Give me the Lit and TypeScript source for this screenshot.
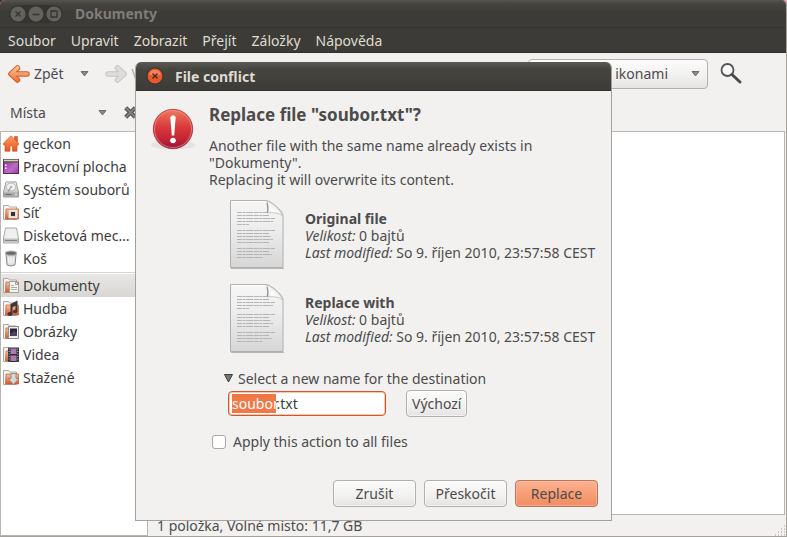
import { LitElement, html, svg, css, type TemplateResult } from "lit";
import { customElement, query, state } from "lit/decorators.js";
import { classMap } from "lit/directives/class-map.js";

interface Place {
  label: string;
  icon: TemplateResult;
  group: number;
}

const folder = svg`
  <path d="M.5 15.5V1.5h5l1 1.5h7v2" fill="#f7f6f4" stroke="#a9a7a2"/>
  <path d="M.5 15.5h13" stroke="#a9a7a2"/>
  <path d="M2.500 15 3 5h12.500v10z" fill="url(#orange)" stroke="#c8603a" stroke-width=".8"/>`;

const defs = svg`
  <defs>
    <linearGradient id="orange" x1="0" y1="0" x2="0" y2="1">
      <stop offset="0" stop-color="#f7c5a4"/><stop offset="1" stop-color="#e2551f"/>
    </linearGradient>
    <linearGradient id="grey" x1="0" y1="0" x2="0" y2="1">
      <stop offset="0" stop-color="#fafafa"/><stop offset="1" stop-color="#b4b4b4"/>
    </linearGradient>
    <linearGradient id="plum" x1="0" y1="0" x2="1" y2="1">
      <stop offset="0" stop-color="#8c2f96"/><stop offset=".6" stop-color="#c069c6"/><stop offset="1" stop-color="#9a3fa0"/>
    </linearGradient>
    <linearGradient id="roof" x1="0" y1="0" x2="0" y2="1">
      <stop offset="0" stop-color="#f9a06c"/><stop offset="1" stop-color="#e8541c"/>
    </linearGradient>
  </defs>`;

const glyph = (body: TemplateResult) =>
  html`<svg class="glyph" viewBox="0 0 16 17" aria-hidden="true">${defs}${body}</svg>`;

const places: Place[] = [
  { group: 0, label: "geckon", icon: glyph(svg`
    <path d="M11.500 1.500h3V8h-3z" fill="#e0622f" stroke="#c94f20" stroke-width=".6"/>
    <path d="M8 .8.6 8v2H2v6.200h5V11h2.500v5.200H14V10h1.400V8z" fill="url(#roof)" stroke="#d4551f" stroke-width=".7"/>`) },
  { group: 0, label: "Pracovní plocha", icon: glyph(svg`
    <rect x=".5" y="1.500" width="15" height="14" fill="url(#plum)" stroke="#5a2260"/>
    <rect x="0" y="1" width="16" height="3.500" fill="#54503c"/>
    <path d="M1 2.500h14" stroke="#d8d6bc" stroke-width="1.400"/>
    <path d="M2 6.500h1.600V8H2zM2 9.500h1.600V11H2z" fill="#fff"/>`) },
  { group: 0, label: "Systém souborů", icon: glyph(svg`
    <path d="M3 1h10l2.500 10v5H.5v-5z" fill="url(#grey)" stroke="#9a9a9a"/>
    <ellipse cx="8" cy="6" rx="4.800" ry="4" fill="#f0f0f0" stroke="#b5b5b5"/>
    <ellipse cx="8" cy="6" rx="1.300" ry="1" fill="#aaa"/>
    <path d="M7.500 7 5 10.500" stroke="#888" stroke-width="1.100"/>
    <path d="M1 11.500h14V15.500H1z" fill="#a8a8a8"/><path d="M2.500 13.500h6" stroke="#6a6a6a"/>
    <circle cx="13" cy="13.500" r=".9" fill="#eee"/>`) },
  { group: 0, label: "Síť", icon: glyph(svg`${folder}
    <rect x="5.500" y="6" width="9" height="8" fill="#fff" stroke="#d7a58e" stroke-width=".6"/>
    <rect x="6.500" y="7" width="7" height="6" fill="#dcdcdc"/>
    <rect x="8" y="8" width="4" height="4" fill="#333"/>`) },
  { group: 0, label: "Disketová mec…", icon: glyph(svg`
    <path d="M2.500 1h11l2 10v5H.5v-5z" fill="#efefef" stroke="#a9a9a9"/>
    <path d="M1 11.500h14V15.500H1z" fill="#c2c2c2"/>
    <path d="M2 13.500h12" stroke="#868686"/>`) },
  { group: 0, label: "Koš", icon: glyph(svg`
    <path d="M3 4h10l-1 11q-4 2-8 0z" fill="#dcdcdc" stroke="#8c8c8c"/>
    <ellipse cx="8" cy="3.200" rx="5.600" ry="2.200" fill="#6a6a6a" stroke="#b2b2b2" stroke-width="1.200"/>
    <path d="M5.500 7.500 6 13.500M8 7.500v6M10.500 7.500 10 13.500" stroke="#fafafa" stroke-width="1.200"/>`) },
  { group: 1, label: "Dokumenty", icon: glyph(svg`${folder}
    <path d="M6.500 4.500h6l3 3v8h-9z" fill="#f4f4f4" stroke="#a0a0a0"/>
    <path d="M12.500 4.500v3h3" fill="none" stroke="#a0a0a0"/>
    <path d="M8 8.500h3M8 10.500h6M8 12.500h6" stroke="#aaa"/>`) },
  { group: 1, label: "Hudba", icon: glyph(svg`${folder}
    <path d="M8.500 14V4.500l5-2.500v9" fill="none" stroke="#383838" stroke-width="2"/>
    <path d="M8.500 5 13.500 2.500v3l-5 2z" fill="#383838"/>
    <ellipse cx="7" cy="14" rx="2.500" ry="1.900" fill="#383838"/><ellipse cx="12.200" cy="11.500" rx="2.200" ry="1.800" fill="#383838"/>`) },
  { group: 1, label: "Obrázky", icon: glyph(svg`${folder}
    <rect x="5.500" y="3.500" width="10" height="12" fill="#eee" stroke="#8d8d8d"/>
    <rect x="7" y="5.500" width="7" height="7.500" fill="#2d2638"/>
    <path d="M7.500 11 11 8l3 2v3H7.500z" fill="#4c4262"/>`) },
  { group: 1, label: "Videa", icon: glyph(svg`${folder}
    <rect x="5" y="1.500" width="11" height="14.500" fill="#322c34"/>
    <path d="M7.500 2.500h6v5.500h-6zM7.500 9.500h6v5.500h-6z" fill="#a97bb0"/>
    <path d="M6.200 2.500v13M14.800 2.500v13" stroke="#ccc" stroke-width="1" stroke-dasharray="1 1.500"/>`) },
  { group: 1, label: "Stažené", icon: glyph(svg`${folder}
    <path d="M8 4.500h5v5h2.800L10.500 15.500 5.200 9.500H8z" fill="#d9d9d5" stroke="#8c8c88"/>`) },
];

const closeMark = svg`<path d="M5.500 5.500 10.500 10.500M10.500 5.500 5.500 10.500"/>`;

const sheetLines: Array<[number, number]> = [
  [12, 39], [15, 39], [18, 45], [21, 43], [24, 19],
  [30, 45], [33, 39], [36, 41], [39, 43], [42, 39],
  [48, 45], [51, 39], [54, 42], [57, 33],
];

@customElement("text-file-icon")
export class TextFileIcon extends LitElement {
  static styles = css`
    :host { display: block; }
    svg { display: block; width: 56px; height: 70px; }
  `;

  render() {
    return html`<svg viewBox="0 0 56 70" aria-hidden="true">
      <defs>
        <linearGradient id="paper" x1="0" y1="0" x2="0" y2="1">
          <stop offset="0" stop-color="#f6f6f6"/><stop offset=".45" stop-color="#ececec"/><stop offset="1" stop-color="#d6d6d6"/>
        </linearGradient>
        <linearGradient id="curl" x1="0" y1="1" x2="1" y2="0">
          <stop offset="0" stop-color="#c4c4c4"/><stop offset=".35" stop-color="#fff"/><stop offset="1" stop-color="#d0d0d0"/>
        </linearGradient>
      </defs>
      <path d="M1 68.500h53" stroke="#b5b4b2" stroke-width="1.200"/>
      <path d="M.5.5h36c5 1 16 10 16.500 15V67.500H.5z" fill="url(#paper)" stroke="#b0b0ae"/>
      <path d="M1.500 1.500h35" stroke="#fff"/>
      ${sheetLines.map(([y, end]) => svg`<path d="M7 ${y + .5}H${end}" stroke="#b4b4b4" stroke-width="1.200" stroke-dasharray="5 .6 3 .6 7 .6"/>`)}
      <path d="M36.500 1c2 3 2 8 1 12 5-1 12 0 15 3C51 10 42 2 36.500 1z" fill="url(#curl)" stroke="#b4b4b2" stroke-width=".7"/>
      <path d="M37 3c1 3 1 7 .3 9.500" fill="none" stroke="#939393" stroke-width="1.200"/>
    </svg>`;
  }
}

@customElement("conflict-dialog")
export class ConflictDialog extends LitElement {
  static styles = css`
    :host {
      display: block;
      box-sizing: border-box;
      border: 1px solid #a5a29d;
      border-top: 0;
      border-radius: 6px 6px 0 0;
      background: #f2f1f0;
      color: #4c4c4c;
      overflow: hidden;
    }
    .title {
      display: flex;
      align-items: center;
      gap: 11px;
      height: 29px;
      box-sizing: border-box;
      padding: 0 10px;
      background: linear-gradient(#5a5953, #45443f 30%, #3c3b37);
      border-bottom: 1px solid #32312d;
      color: #dfdbd2;
      font-size: 14px;
      font-weight: bold;
    }
    .close { padding: 0; border: 0; background: none; height: 18px; }
    .close svg { display: block; width: 18px; height: 18px; }
    .body { display: flex; padding: 12px 13px 0 13px; }
    .alert { flex: none; width: 48px; height: 48px; margin: 0 12px 0 0; }
    .content { flex: 1; min-width: 0; }
    h1 { margin: 0; font-size: 17px; line-height: 24px; }
    p { margin: 10px 0 12px; line-height: 17px; max-width: 348px; }
    .file { display: flex; align-items: center; gap: 19px; margin: 0 0 14px 21px; height: 70px; }
    .facts { line-height: 17px; white-space: nowrap; }
    .facts div { margin: 0; }
    .expander {
      display: flex;
      align-items: center;
      gap: 5px;
      padding: 0;
      margin: 0 0 1px 15px;
      border: 0;
      background: none;
      color: inherit;
      font: inherit;
      line-height: 21px;
    }
    .expander svg { width: 9px; height: 9px; }
    .rename { display: flex; align-items: center; gap: 20px; margin-left: 19px; }
    .name {
      box-sizing: border-box;
      width: 158px;
      height: 25px;
      padding: 0 3px;
      border: 1px solid #d3562c;
      border-radius: 4px;
      box-shadow: inset 0 0 0 1px #f8c5b0;
      outline: none;
      background: #fff;
      color: #3c3c3c;
      font: inherit;
    }
    .name::selection { background: #f07746; color: #fff; }
    .push {
      box-sizing: border-box;
      height: 27px;
      padding: 0 5px;
      border: 1px solid #b3b0ab;
      border-radius: 4px;
      background: linear-gradient(#fcfcfc, #f1f0ef 60%, #e6e4e2);
      box-shadow: inset 0 0 0 1px #fff8;
      color: inherit;
      font: inherit;
    }
    .all { display: flex; align-items: center; gap: 7px; margin: 16px 0 0 3px; line-height: 18px; }
    .tick {
      appearance: none;
      box-sizing: border-box;
      width: 14px;
      height: 14px;
      margin: 0;
      border: 1px solid #aaa7a2;
      border-radius: 3px;
      background: #fff;
    }
    .actions { display: flex; justify-content: flex-end; gap: 8px; padding: 29px 13px 13px; }
    .actions .push { width: 83px; }
    .actions .go {
      border-color: #b1775f;
      background: linear-gradient(#fcb292, #f79a72 60%, #f08b62);
      box-shadow: inset 0 0 0 1px #ffc2a688;
    }
  `;

  @state() private open = true;
  @query(".name") private field?: HTMLInputElement;

  firstUpdated() {
    this.field?.focus();
    this.field?.setSelectionRange(0, 6);
  }

  private file(title: string) {
    return html`<div class="file">
      <text-file-icon></text-file-icon>
      <div class="facts">
        <div><b>${title}</b></div>
        <div><i>Velikost:</i> 0 bajtů</div>
        <div><i>Last modified:</i> So 9. říjen 2010, 23:57:58 CEST</div>
      </div>
    </div>`;
  }

  render() {
    return html`
      <div class="title">
        <button class="close" aria-label="Zavřít">
          <svg viewBox="-1 -1 18 18"><circle cx="8" cy="8" r="8.500" fill="#35342f"/><circle cx="8" cy="8" r="7.500" fill="#e9592a"/><path d="M2 6.500a6.300 6.300 0 0 1 12 0q-6 2-12 0z" fill="#f58460"/><g stroke="#47241a" stroke-width="1.300">${closeMark}</g></svg>
        </button>
        <span>File conflict</span>
      </div>
      <div class="body">
        <svg class="alert" viewBox="0 0 48 48" aria-hidden="true">
          <defs><linearGradient id="red" x1="0" y1="0" x2="0" y2="1">
            <stop offset="0" stop-color="#ef7a60"/><stop offset=".45" stop-color="#d93a3c"/><stop offset=".8" stop-color="#bf2233"/><stop offset="1" stop-color="#8c1547"/>
          </linearGradient></defs>
          <ellipse cx="24" cy="42" rx="22" ry="4.500" fill="#e4e3e1"/>
          <circle cx="24" cy="26" r="19.700" fill="url(#red)" stroke="#b22a35" stroke-width=".8"/>
          <circle cx="24" cy="26" r="18.500" fill="none" stroke="#f29a8d" stroke-width=".8" opacity=".8"/>
          <path d="M21.300 14q2.700-3.500 5.400 0l-1.500 18.500h-2.400z" fill="#fff"/>
          <circle cx="24" cy="37.500" r="2.800" fill="#fff"/>
        </svg>
        <div class="content">
          <h1>Replace file "soubor.txt"?</h1>
          <p>Another file with the same name already exists in "Dokumenty".<br>Replacing it will overwrite its content.</p>
          ${this.file("Original file")}
          ${this.file("Replace with")}
          <button class="expander" aria-expanded=${this.open} @click=${() => (this.open = !this.open)}>
            <svg viewBox="0 0 9 9" aria-hidden="true"><path d="M.5.5h8l-4 7.500z" fill="#777" stroke="#3c3c3c"/></svg>
            <span>Select a new name for the destination</span>
          </button>
          ${this.open ? html`<div class="rename">
            <input class="name" type="text" aria-label="Select a new name for the destination" value="soubor.txt">
            <button class="push">Výchozí</button>
          </div>` : null}
          <label class="all"><input class="tick" type="checkbox">Apply this action to all files</label>
        </div>
      </div>
      <div class="actions">
        <button class="push">Zrušit</button>
        <button class="push">Přeskočit</button>
        <button class="push go">Replace</button>
      </div>`;
  }
}

@customElement("app-root")
export class AppRoot extends LitElement {
  static styles = css`
    :host {
      display: block;
      position: relative;
      background: linear-gradient(90deg, #5b1f35, #e0a3b5);
      color: #4c4c4c;
      font: 14px "Noto Sans", "Liberation Sans", sans-serif;
    }
    .window {
      display: flex;
      flex-direction: column;
      box-sizing: border-box;
      min-height: 100vh;
      border: 1px solid #a5a29d;
      border-width: 0 1px 1px 0;
      border-radius: 5px 5px 0 0;
      background: #f2f1f0;
      overflow: hidden;
    }
    button { font: inherit; color: inherit; border: 0; padding: 0; background: none; }
    .title {
      display: flex;
      align-items: center;
      gap: 12px;
      box-sizing: border-box;
      height: 28px;
      padding: 0 9px;
      background: linear-gradient(#55544f, #45443f 15%, #3c3b37 50%);
      border-bottom: 1px solid #35342f;
      color: #807d78;
      font-size: 14px;
      font-weight: bold;
    }
    .controls { display: flex; border-radius: 9px; background: #35342f; }
    .controls button { height: 18px; }
    .controls svg { display: block; width: 18px; height: 18px; }
    .menu {
      display: flex;
      align-items: center;
      gap: 15px;
      box-sizing: border-box;
      height: 25px;
      padding: 0 8px;
      background: #3c3b37;
      border-bottom: 1px solid #2f2e2b;
      color: #dfdbd2;
    }
    .tools { display: flex; align-items: center; height: 41px; padding: 0 43px 0 7px; }
    .tools svg { display: block; }
    .nav { display: flex; align-items: center; gap: 4px; }
    .arrow { width: 23px; height: 20px; }
    .down { width: 9px; height: 6px; }
    .history { margin: 0 16px 0 16px; }
    .forward { color: #aaa8a5; }
    .view {
      appearance: none;
      box-sizing: border-box;
      width: 180px;
      height: 30px;
      padding: 0 39px 0 0;
      border: 1px solid #b3b0ab;
      border-radius: 4px;
      background: linear-gradient(#fcfcfc, #f1f0ef 60%, #e6e4e2);
      color: inherit;
      font: inherit;
      text-align: right;
      text-align-last: right;
    }
    .combo { display: grid; align-items: center; margin-left: auto; }
    .combo > * { grid-area: 1 / 1; }
    .combo .down { justify-self: end; margin-right: 8px; pointer-events: none; }
    .search { margin-left: 11px; }
    .search svg { width: 24px; height: 24px; }
    .panes { display: flex; flex: 1; }
    .side { display: flex; flex-direction: column; flex: none; width: 148px; }
    .side-head { display: flex; align-items: center; height: 37px; padding: 0 10px; }
    .side-head .pick { display: flex; flex: 1; align-items: center; justify-content: space-between; }
    .side-head .shut { margin-left: 16px; }
    .side-head svg { display: block; }
    .shut svg { width: 15px; height: 15px; }
    .list {
      flex: 1;
      margin: 0;
      border: 1px solid #b9b6b1;
      background: #fff;
    }
    .group { margin: 0; padding: 0; list-style: none; }
    .group + .group { margin-top: 2px; border-top: 1px solid #d6d4d1; padding-top: 1px; }
    .place { display: flex; align-items: center; gap: 4px; width: 100%; height: 23px; padding-left: 2px; white-space: nowrap; color: #3c3c3c; }
    .current { background: linear-gradient(#e9e7e5, #d9d7d4); }
    .glyph { flex: none; width: 16px; height: 17px; }
    .main { display: flex; flex-direction: column; flex: 1; min-width: 0; padding-top: 37px; }
    .files { flex: 1; border: 1px solid #b9b6b1; background: #fff; margin-right: 1px; }
    .status { display: flex; align-items: center; justify-content: space-between; height: 21px; padding-left: 9px; }
    .grip { align-self: flex-end; width: 11px; height: 11px; }
    .dialog { position: absolute; left: 135px; top: 62px; width: 477px; font-size: 14px; }
  `;

  @state() private current = "Dokumenty";

  private down() {
    return html`<svg class="down" viewBox="0 0 9 6" aria-hidden="true"><path d="M1 .5h7l-3.500 4.500z" fill="#8b8987" stroke="#706e6c"/></svg>`;
  }

  private arrow(forward: boolean) {
    const d = "M10.500 4 4 10l6.500 6M4.500 10H20";
    const flip = forward ? "matrix(-1 0 0 1 23 0)" : "";
    return html`<svg class="arrow" viewBox="0 0 23 20" aria-hidden="true">
      <defs><linearGradient id="back" gradientUnits="userSpaceOnUse" x1="0" y1="2" x2="0" y2="18"><stop offset="0" stop-color="#fbc9a2"/><stop offset="1" stop-color="#ee6f30"/></linearGradient></defs>
      <g transform=${flip} fill="none" stroke-linecap="round" stroke-linejoin="round">
        <path d=${d} stroke=${forward ? "#c6c4c1" : "#d2592a"} stroke-width="5.500"/>
        <path d=${d} stroke=${forward ? "#dfdddb" : "url(#back)"} stroke-width="3.600"/>
      </g>
    </svg>`;
  }

  private control(label: string, mark: TemplateResult) {
    return html`<button aria-label=${label}><svg viewBox="-1 -1 18 18"><circle cx="8" cy="8" r="7.500" fill="#63625d"/><g fill="none" stroke="#35342f" stroke-width="1.300">${mark}</g></svg></button>`;
  }

  render() {
    return html`
      <div class="window">
        <div class="title">
          <div class="controls">
            ${this.control("Zavřít", closeMark)}
            ${this.control("Minimalizovat", svg`<path d="M4.500 8.500h7"/>`)}
            ${this.control("Maximalizovat", svg`<path d="M5 5h6v6H5z"/>`)}
          </div>
          <span>Dokumenty</span>
        </div>
        <nav class="menu">
          ${["Soubor", "Upravit", "Zobrazit", "Přejít", "Záložky", "Nápověda"].map((m) => html`<button>${m}</button>`)}
        </nav>
        <div class="tools">
          <button class="nav">${this.arrow(false)}Zpět</button>
          <button class="history" aria-label="Historie">${this.down()}</button>
          <button class="nav forward">${this.arrow(true)}Vpřed</button>
          <div class="combo">
            <select class="view" aria-label="Zobrazení"><option>Zobrazit s ikonami</option></select>
            ${this.down()}
          </div>
          <button class="search" aria-label="Hledat">
            <svg viewBox="0 0 24 24"><circle cx="8.500" cy="8" r="6" fill="#f8f8f8" stroke="#555" stroke-width="1.800"/><path d="m13 12.500 8 7.500" stroke="#4a4a4a" stroke-width="3" stroke-linecap="round"/></svg>
          </button>
        </div>
        <div class="panes">
          <aside class="side">
            <div class="side-head">
              <button class="pick">Místa ${this.down()}</button>
              <button class="shut" aria-label="Zavřít panel"><svg viewBox="0 0 14 14"><path d="m2.500 2.500 9 9M11.500 2.500l-9 9" stroke="#595959" stroke-width="4"/><path d="m2.500 2.500 9 9M11.500 2.500l-9 9" stroke="#858585" stroke-width="1.500"/></svg></button>
            </div>
            <div class="list">
              ${[0, 1].map((g) => html`<ul class="group">
                ${places.filter((p) => p.group === g).map((p) => html`<li>
                  <button class=${classMap({ place: true, current: p.label === this.current })} @click=${() => (this.current = p.label)}>${p.icon}<span>${p.label}</span></button>
                </li>`)}
              </ul>`)}
            </div>
          </aside>
          <main class="main">
            <div class="files"></div>
            <div class="status">
              <span>1 položka, Volné místo: 11,7 GB</span>
              <svg class="grip" viewBox="0 0 11 11" aria-hidden="true"><path d="M9 1h1M6 4h1m2 0h1M3 7h1m2 0h1m2 0h1M0 10h1m2 0h1m2 0h1m2 0h1" stroke="#a09d99" stroke-width="1"/></svg>
            </div>
          </main>
        </div>
      </div>
      <conflict-dialog class="dialog" role="dialog" aria-label="File conflict"></conflict-dialog>`;
  }
}
